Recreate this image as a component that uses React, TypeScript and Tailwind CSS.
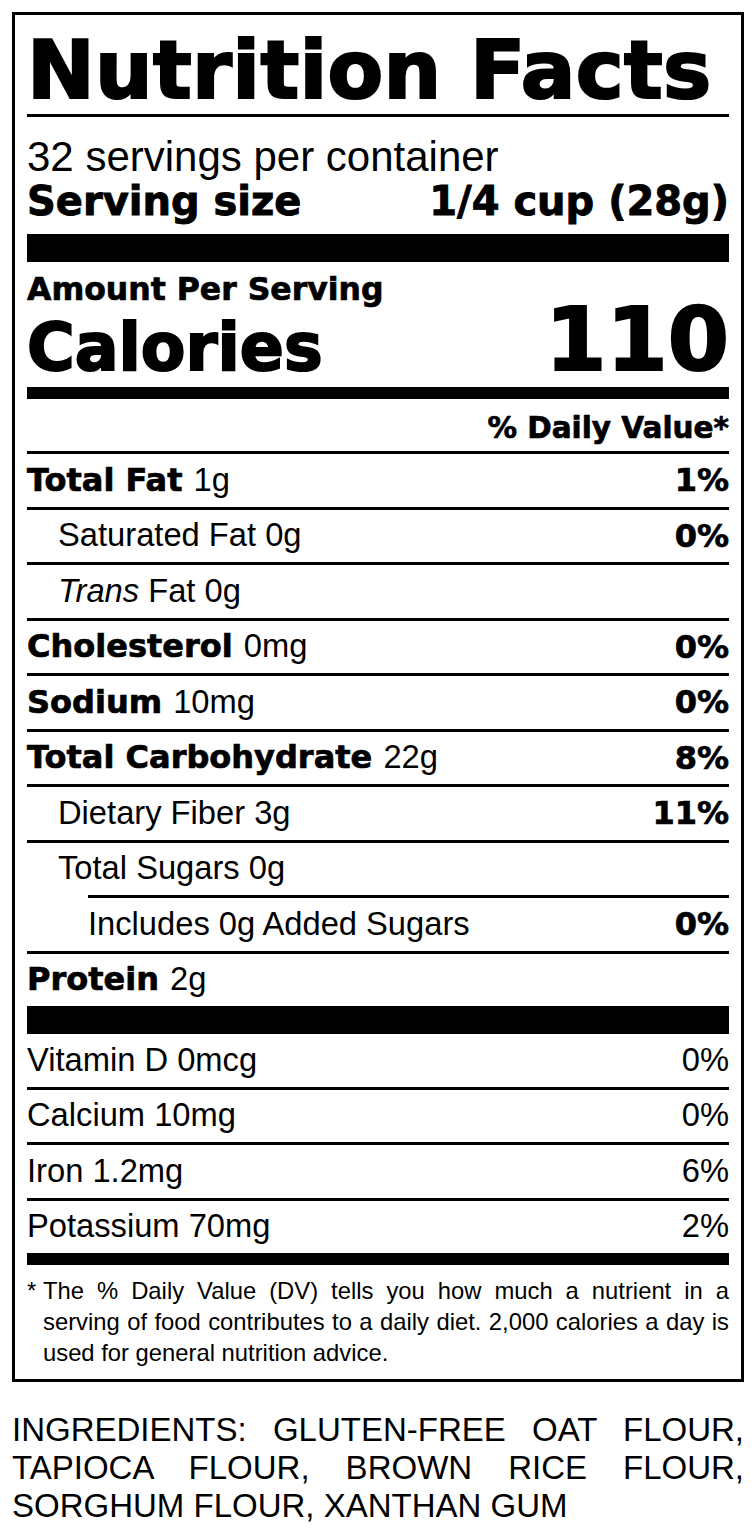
import React from "react";

const B = "font-['DejaVu_Sans',sans-serif] font-bold";
const R = "font-['Liberation_Sans',Arial,sans-serif] font-normal";
const BL = `${B} text-[32px] [-webkit-text-stroke:0.7px_black]`;
const ROW = "h-[55.5px] border-b-[3px] border-black flex items-center justify-between text-[32.7px] leading-none";
const ROWNB = "h-[52.5px] flex items-center justify-between text-[32.7px] leading-none";

export default function App() {
  return (
    <div className={`bg-white text-black p-3 ${R}`}>
      <div className="border-[3px] border-black px-3">
        {/* Title */}
        <div className="h-[99px] pt-[11px] flex items-center">
          <h1 className={`${B} text-[81px] leading-none tracking-[0.3px] [-webkit-text-stroke:2.2px_black] whitespace-nowrap`}>
            Nutrition Facts
          </h1>
        </div>
        <div className="h-[3px] bg-black" />

        {/* Servings */}
        <div className="h-[117px] pt-[19px]">
          <div className={`${R} text-[42px] leading-[42px] h-[42px]`}>32 servings per container</div>
          <div className={`${B} mt-[3px] flex justify-between text-[40px] leading-[40px] h-[40px] [-webkit-text-stroke:0.9px_black]`}>
            <span>Serving size</span>
            <span>1/4 cup (28g)</span>
          </div>
        </div>
        <div className="h-[28px] bg-black" />

        {/* Calories */}
        <div className="h-[125px] pt-[12px]">
          <div className={`${B} text-[31.5px] leading-[31px] h-[31px] [-webkit-text-stroke:0.7px_black]`}>Amount Per Serving</div>
          <div className={`${B} flex justify-between items-baseline h-[70px] leading-[70px]`}>
            <span className="text-[65px] [-webkit-text-stroke:2px_black]">Calories</span>
            <span className="text-[88px] [-webkit-text-stroke:2.2px_black]">110</span>
          </div>
        </div>
        <div className="h-[12px] bg-black" />

        <div className="h-[52px] pt-[8px] flex items-center justify-end">
          <span className={`${B} text-[29.5px] leading-none [-webkit-text-stroke:0.7px_black]`}>% Daily Value*</span>
        </div>
        <div className="h-[3px] bg-black" />

        {/* Nutrient rows */}
        <div className={ROW}>
          <span>
            <span className={BL}>Total Fat </span>1g
          </span>
          <span className={BL}>1%</span>
        </div>
        <div className={`${ROW} pl-[31px]`}>
          <span>Saturated Fat 0g</span>
          <span className={BL}>0%</span>
        </div>
        <div className={`${ROW} pl-[31px]`}>
          <span>
            <span className="italic">Trans</span> Fat 0g
          </span>
        </div>
        <div className={ROW}>
          <span>
            <span className={BL}>Cholesterol </span>0mg
          </span>
          <span className={BL}>0%</span>
        </div>
        <div className={ROW}>
          <span>
            <span className={BL}>Sodium </span>10mg
          </span>
          <span className={BL}>0%</span>
        </div>
        <div className={ROW}>
          <span>
            <span className={BL}>Total Carbohydrate </span>22g
          </span>
          <span className={BL}>8%</span>
        </div>
        <div className={`${ROW} pl-[31px]`}>
          <span>Dietary Fiber 3g</span>
          <span className={BL}>11%</span>
        </div>
        <div className={`${ROWNB} pl-[31px]`}>
          <span>Total Sugars 0g</span>
        </div>
        <div className="pl-[61px]">
          <div className="h-[3px] bg-black" />
        </div>
        <div className={`${ROW} pl-[61px]`}>
          <span>Includes 0g Added Sugars</span>
          <span className={BL}>0%</span>
        </div>
        <div className={ROWNB}>
          <span>
            <span className={BL}>Protein </span>2g
          </span>
        </div>
        <div className="h-[28px] bg-black" />

        {/* Vitamins */}
        <div className={ROW}>
          <span>Vitamin D 0mcg</span>
          <span>0%</span>
        </div>
        <div className={ROW}>
          <span>Calcium 10mg</span>
          <span>0%</span>
        </div>
        <div className={ROW}>
          <span>Iron 1.2mg</span>
          <span>6%</span>
        </div>
        <div className={ROWNB}>
          <span>Potassium 70mg</span>
          <span>2%</span>
        </div>
        <div className="h-[12px] bg-black" />

        {/* Footnote */}
        <div className="pt-[10px] pb-[11px] flex text-[23.8px] leading-[31px]">
          <span className="w-[16px] shrink-0">*</span>
          <div className="flex-1">
            <p className="text-justify [text-align-last:justify]">
              The % Daily Value (DV) tells you how much a nutrient in a
            </p>
            <p className="text-justify [text-align-last:justify]">
              serving of food contributes to a daily diet. 2,000 calories a day is
            </p>
            <p>used for general nutrition advice.</p>
          </div>
        </div>
      </div>

      {/* Ingredients */}
      <p className="mt-[29px] text-[33px] leading-[38px] text-justify">
        INGREDIENTS: GLUTEN-FREE OAT FLOUR, TAPIOCA FLOUR, BROWN RICE FLOUR, SORGHUM FLOUR, XANTHAN GUM
      </p>
    </div>
  );
}
